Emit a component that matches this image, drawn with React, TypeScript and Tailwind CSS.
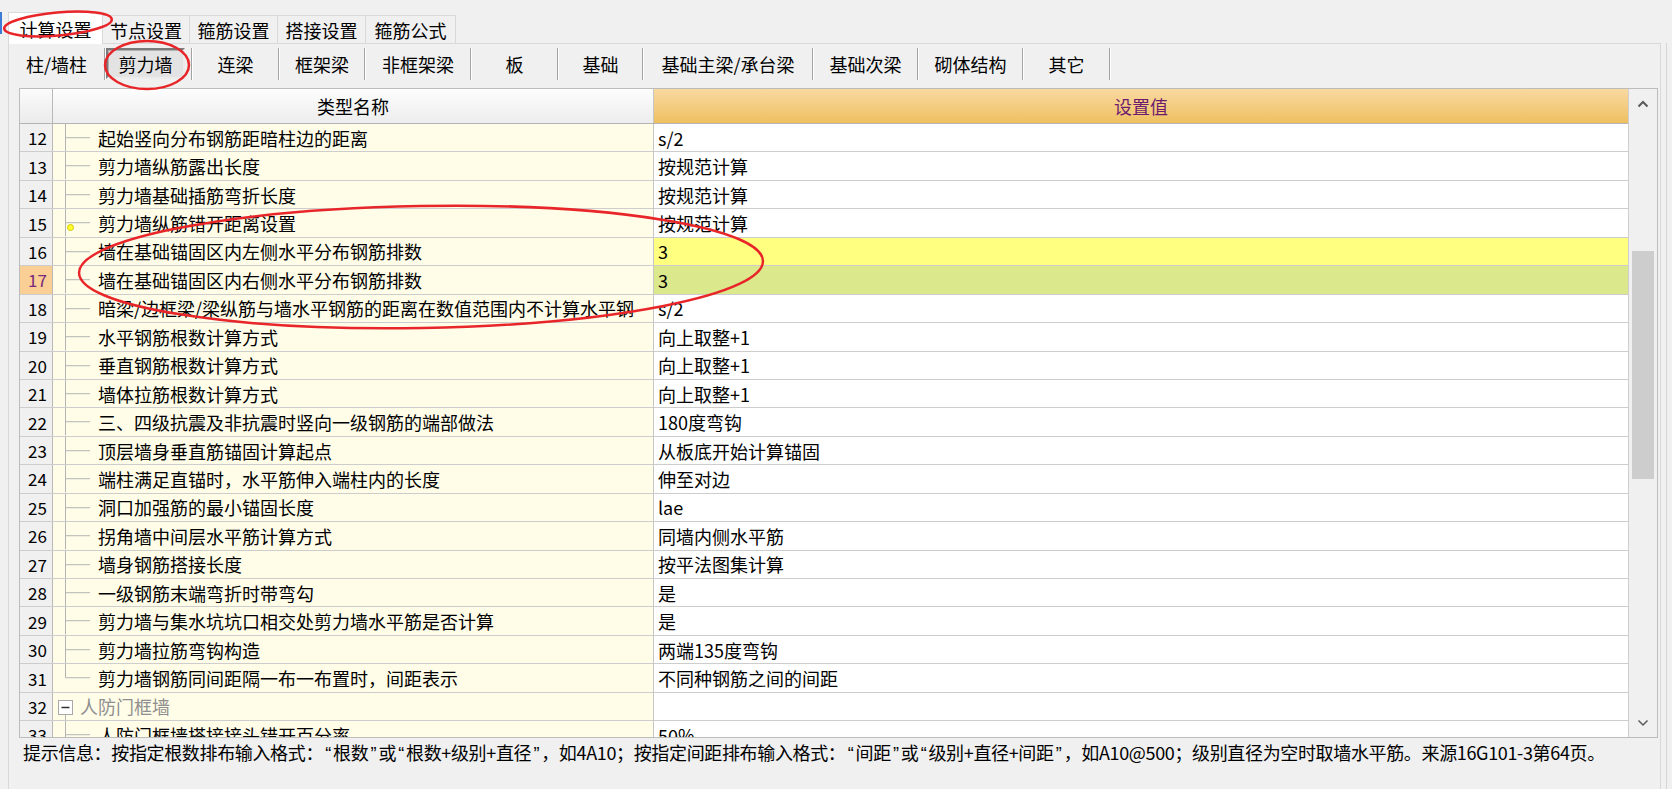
import React from "react";

type Row = {
    n: number;
    name: string;
    value: string;
    kind?: "last" | "group" | "child";
    bg?: string;
};

const rows: Row[] = [
    { n: 12, name: "起始竖向分布钢筋距暗柱边的距离", value: "s/2" },
    { n: 13, name: "剪力墙纵筋露出长度", value: "按规范计算" },
    { n: 14, name: "剪力墙基础插筋弯折长度", value: "按规范计算" },
    { n: 15, name: "剪力墙纵筋错开距离设置", value: "按规范计算" },
    { n: 16, name: "墙在基础锚固区内左侧水平分布钢筋排数", value: "3", bg: "yellow" },
    { n: 17, name: "墙在基础锚固区内右侧水平分布钢筋排数", value: "3", bg: "green" },
    { n: 18, name: "暗梁/边框梁/梁纵筋与墙水平钢筋的距离在数值范围内不计算水平钢", value: "s/2" },
    { n: 19, name: "水平钢筋根数计算方式", value: "向上取整+1" },
    { n: 20, name: "垂直钢筋根数计算方式", value: "向上取整+1" },
    { n: 21, name: "墙体拉筋根数计算方式", value: "向上取整+1" },
    { n: 22, name: "三、四级抗震及非抗震时竖向一级钢筋的端部做法", value: "180度弯钩" },
    { n: 23, name: "顶层墙身垂直筋锚固计算起点", value: "从板底开始计算锚固" },
    { n: 24, name: "端柱满足直锚时，水平筋伸入端柱内的长度", value: "伸至对边" },
    { n: 25, name: "洞口加强筋的最小锚固长度", value: "lae" },
    { n: 26, name: "拐角墙中间层水平筋计算方式", value: "同墙内侧水平筋" },
    { n: 27, name: "墙身钢筋搭接长度", value: "按平法图集计算" },
    { n: 28, name: "一级钢筋末端弯折时带弯勾", value: "是" },
    { n: 29, name: "剪力墙与集水坑坑口相交处剪力墙水平筋是否计算", value: "是" },
    { n: 30, name: "剪力墙拉筋弯钩构造", value: "两端135度弯钩" },
    { n: 31, name: "剪力墙钢筋同间距隔一布一布置时，间距表示", value: "不同种钢筋之间的间距", kind: "last" },
    { n: 32, name: "人防门框墙", value: "", kind: "group" },
    { n: 33, name: "人防门框墙搭接接头错开百分率", value: "50%", kind: "child" },
];

const subTabs = [
    { label: "柱/墙柱", w: "w-[95px]" },
    { label: "剪力墙", w: "w-[85px]", pressed: true },
    { label: "连梁", w: "w-[85px]" },
    { label: "框架梁", w: "w-[84px]" },
    { label: "非框架梁", w: "w-[104px]" },
    { label: "板", w: "w-[85px]" },
    { label: "基础", w: "w-[83px]" },
    { label: "基础主梁/承台梁", w: "w-[168px]" },
    { label: "基础次梁", w: "w-[103px]" },
    { label: "砌体结构", w: "w-[103px]" },
    { label: "其它", w: "w-[85px]" },
];

// half-width quotes like the original font shows them
const Q = ({ c }: { c: string }) => (
    <span className="inline-block w-[10px] text-center font-['Liberation_Sans',sans-serif]">{c}</span>
);

const TreeLines = ({ last }: { last?: boolean }) => (
    <svg className="w-[45px] h-full shrink-0" width="45">
        <line x1="12.5" y1="0" x2="12.5" y2={last ? "50%" : "100%"} stroke="#b4b4b4" strokeWidth="1" />
        <line x1="12.5" y1="50%" x2="37" y2="50%" stroke="#b4b4b4" strokeWidth="1" />
    </svg>
);

const GridRow = ({ row }: { row: Row }) => {
    const valueBg =
        row.bg === "yellow" ? "bg-[#ffff80]" : row.bg === "green" ? "bg-[#dbe88c]" : "bg-white";
    const numCls =
        row.n === 17
            ? "bg-[#f9cf96] text-[#7a2a7a]"
            : "bg-[#f0f0f0] text-black";
    return (
        <div className="flex h-[28.45px] shrink-0 border-b border-[#cdcdcd]">
            <div className={`w-[33px] shrink-0 border-r border-[#b9b9b9] flex items-center justify-center pl-[3px] text-[17px] ${numCls}`}>
                {row.n}
            </div>
            <div className="w-[601px] shrink-0 border-r border-[#c6c6c6] bg-[#fffde8] flex items-center overflow-hidden relative">
                {row.kind === "group" ? (
                    <>
                        <svg className="w-[27px] h-full shrink-0" width="27">
                            <rect x="5.5" y="7.5" width="14" height="14" fill="white" stroke="#a8a8a8" />
                            <line x1="8.5" y1="14.5" x2="16.5" y2="14.5" stroke="#333" strokeWidth="1.5" />
                            <line x1="12.5" y1="21.5" x2="12.5" y2="100%" stroke="#b4b4b4" />
                        </svg>
                        <span className="text-[18px] text-[#8f8f8f] whitespace-nowrap">{row.name}</span>
                    </>
                ) : (
                    <>
                        <TreeLines last={row.kind === "last"} />
                        <span className="text-[18px] text-black whitespace-nowrap">{row.name}</span>
                    </>
                )}
                {row.n === 15 && (
                    <span className="absolute left-[14px] top-[15px] w-[7px] h-[7px] rounded-full bg-[#ffff30] border border-[#d8c800]" />
                )}
            </div>
            <div className={`flex-1 flex items-center pl-[4px] text-[18px] text-black whitespace-nowrap overflow-hidden ${valueBg}`}>
                {row.value}
            </div>
        </div>
    );
};

const App = () => {
    return (
        <div className="relative w-[1672px] h-[789px] overflow-hidden bg-[#f0f0f0] font-['Noto_Sans_CJK_SC',sans-serif] leading-none select-none">
            {/* top tabs */}
            <div className="flex items-end h-[43px] pt-[12px]">
                <div className="w-[2px] h-[22px] self-start bg-[#3d7bd6]" />
                <div className="relative z-10 -mb-px ml-[6px] w-[95px] h-[32px] bg-white border border-b-0 border-[#d9d9d9] flex items-center justify-center text-[18px] text-black">
                    计算设置
                </div>
                {["节点设置", "箍筋设置", "搭接设置", "箍筋公式"].map((t, i) => (
                    <div
                        key={t}
                        className={`h-[28px] border-t border-r border-[#d9d9d9] bg-[#f0f0f0] flex items-center justify-center text-[18px] text-black ${i === 0 ? "w-[87px]" : i === 3 ? "w-[90px]" : "w-[88px]"}`}
                    >
                        {t}
                    </div>
                ))}
            </div>

            <div className="flex">
                <div className="ml-[8px] w-[1653px] h-[746px] border-l border-r border-t border-[#d9d9d9] bg-[#f0f0f0] flex flex-col">
                    {/* sub tabs */}
                    <div className="mt-[2px] h-[35px] flex items-center">
                        {subTabs.map((t) => (
                            <React.Fragment key={t.label}>
                                <div className={`${t.w} h-full flex items-center justify-center text-[18px] text-black shrink-0`}>
                                    {t.pressed ? (
                                        <div className="w-[79px] h-[31px] mr-[6px] flex items-center justify-center bg-[#e3e3e3] border-2 border-t-[#7a7a7a] border-l-[#7a7a7a] border-r-[#ececec] border-b-[#ececec] shadow-[inset_1px_1px_0_#b0b0b0]">
                                            {t.label}
                                        </div>
                                    ) : (
                                        t.label
                                    )}
                                </div>
                                <div className="w-[2px] h-[32px] shrink-0 border-l border-[#a3a3a3] border-r border-r-white" />
                            </React.Fragment>
                        ))}
                    </div>

                    {/* grid */}
                    <div className="mt-[7px] ml-[10px] w-[1639px] h-[650px] border border-[#bcbcbc] flex">
                        <div className="w-[1608px] h-full flex flex-col overflow-hidden">
                            <div className="flex h-[35px] shrink-0 border-b border-[#b4b4b4]">
                                <div className="w-[33px] shrink-0 border-r border-[#b9b9b9] bg-gradient-to-b from-[#fbfbfb] to-[#ebebeb]" />
                                <div className="w-[601px] shrink-0 border-r border-[#c6c6c6] bg-gradient-to-b from-[#fdfdfd] to-[#ededed] flex items-center justify-center text-[18px] text-black">
                                    类型名称
                                </div>
                                <div className="flex-1 bg-gradient-to-b from-[#f9d9a0] to-[#efc060] flex items-center justify-center text-[18px] text-[#6e1a6e]">
                                    设置值
                                </div>
                            </div>
                            {rows.map((r) => (
                                <GridRow key={r.n} row={r} />
                            ))}
                        </div>
                        {/* scrollbar */}
                        <div className="w-[29px] h-full border-l border-[#cfcfcf] bg-[#f0f0f0] flex flex-col">
                            <div className="h-[30px] flex items-center justify-center">
                                <svg width="12" height="8" viewBox="0 0 12 8">
                                    <polyline points="1.5,6.5 6,2 10.5,6.5" fill="none" stroke="#5a5a5a" strokeWidth="2" />
                                </svg>
                            </div>
                            <div className="mt-[132px] ml-[3px] w-[22px] h-[228px] bg-[#cdcdcd]" />
                            <div className="mt-auto h-[28px] flex items-center justify-center">
                                <svg width="12" height="8" viewBox="0 0 12 8">
                                    <polyline points="1.5,1.5 6,6 10.5,1.5" fill="none" stroke="#5a5a5a" strokeWidth="1.5" />
                                </svg>
                            </div>
                        </div>
                    </div>

                    {/* hint */}
                    <div className="mt-[3px] pl-[14px] h-[24px] flex items-center text-[18px] tracking-[-0.35px] text-black whitespace-nowrap">
                        <span>
                            提示信息：按指定根数排布输入格式：<Q c="“" />根数<Q c="”" />或<Q c="“" />根数+级别+直径<Q c="”" />，如4A10；按指定间距排布输入格式：<Q c="“" />间距<Q c="”" />或<Q c="“" />级别+直径+间距<Q c="”" />，如A10@500；级别直径为空时取墙水平筋。来源16G101-3第64页。
                        </span>
                    </div>
                </div>
                <div className="ml-[5px] w-px h-[746px] bg-[#d6d6d6]" />
            </div>

            {/* red annotation marks */}
            <svg className="absolute left-0 top-0 z-20 pointer-events-none" width="1672" height="789">
                <g fill="none" stroke="#e8262a" strokeWidth="2.5">
                    <ellipse cx="58" cy="24" rx="54" ry="11.5" transform="rotate(-5 58 24)" />
                    <ellipse cx="147" cy="65" rx="42" ry="24" />
                    <ellipse cx="421" cy="267" rx="342" ry="61" transform="rotate(-1 421 267)" />
                </g>
            </svg>
        </div>
    );
};

export default App;
